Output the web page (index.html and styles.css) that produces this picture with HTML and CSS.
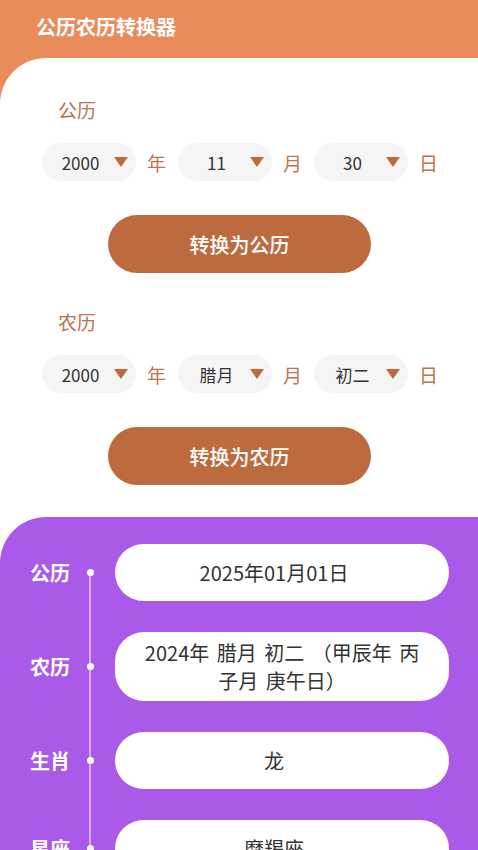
FILE: index.html
```html
<!DOCTYPE html>
<html lang="zh">
    <head>
        <meta charset="UTF-8" />
        <meta name="viewport" content="width=device-width, initial-scale=1.0" />
        <title>公历农历转换器</title>
        <link rel="stylesheet" href="styles.css">
    </head>
    <body>
        <div class="header">
            <h3>公历农历转换器</h3>
        </div>
        <div class="main">
            <div class="form">
                <!-- 公历 -->
                <div class="section">
                    <h5>公历</h5>
                    <div class="pickers">
                        <div class="picker"><span>2000</span><i></i></div>
                        <span class="unit">年</span>
                        <div class="picker"><span>11</span><i></i></div>
                        <span class="unit">月</span>
                        <div class="picker"><span>30</span><i></i></div>
                        <span class="unit">日</span>
                    </div>
                    <button class="convert">转换为公历</button>
                </div>
                <!-- 农历 -->
                <div class="section">
                    <h5>农历</h5>
                    <div class="pickers">
                        <div class="picker"><span>2000</span><i></i></div>
                        <span class="unit">年</span>
                        <div class="picker"><span>腊月</span><i></i></div>
                        <span class="unit">月</span>
                        <div class="picker"><span>初二</span><i></i></div>
                        <span class="unit">日</span>
                    </div>
                    <button class="convert">转换为农历</button>
                </div>
            </div>

            <div class="result">
                <ul class="list">
                    <li>
                        <span class="name">公历</span>
                        <span class="dot"></span>
                        <div class="value">2025年01月01日</div>
                    </li>
                    <li>
                        <span class="name">农历</span>
                        <span class="dot"></span>
                        <div class="value wide">2024年 腊月 初二 （甲辰年 丙子月 庚午日）</div>
                    </li>
                    <li>
                        <span class="name">生肖</span>
                        <span class="dot"></span>
                        <div class="value">龙</div>
                    </li>
                    <li>
                        <span class="name">星座</span>
                        <span class="dot"></span>
                        <div class="value">摩羯座</div>
                    </li>
                </ul>
            </div>
        </div>
    </body>
</html>
```

FILE: styles.css
```css
body {
    margin: 0;
    background: #e98b5b;
    font-family: "Noto Sans CJK SC", "Noto Sans", sans-serif;
    overflow: hidden;
}
ul {
    margin: 0;
    padding: 0;
    list-style: none;
}
h3,
h5 {
    margin: 0;
}
.header {
    height: 58px;
    display: flex;
    align-items: center;
    padding-left: 36px;
    padding-bottom: 5px;
    box-sizing: border-box;
}
.header h3 {
    color: white;
    font-size: 20px;
    font-weight: 700;
}
.main {
    background: white;
    border-top-left-radius: 46px;
    min-height: 792px;
}
.form {
    padding: 39px 0 32px 42px;
}
.section + .section {
    margin-top: 36px;
}
.section h5 {
    padding-left: 16px;
    font-size: 19px;
    line-height: 26px;
    font-weight: 400;
    color: #b8734f;
}
.pickers {
    display: flex;
    align-items: center;
    margin-top: 20px;
}
.picker {
    width: 94px;
    height: 38px;
    box-sizing: border-box;
    padding: 0 8px 0 10px;
    border-radius: 19px;
    background: #f5f5f5;
    display: flex;
    align-items: center;
}
.picker span {
    flex: 1;
    text-align: center;
    font-size: 17px;
    color: #333;
}
.picker i {
    width: 0;
    height: 0;
    margin-left: 5px;
    border-left: 7px solid transparent;
    border-right: 7px solid transparent;
    border-top: 10px solid #bd6a3c;
}
.unit {
    margin: 0 12px 0 11px;
    font-size: 19px;
    color: #c0744c;
}
.convert {
    display: block;
    width: 263px;
    height: 58px;
    margin: 34px 0 0 66px;
    border: none;
    border-radius: 29px;
    background: #bc6b3f;
    color: white;
    font-family: inherit;
    font-size: 20px;
    font-weight: 500;
}
.result {
    background: #a95ae8;
    border-top-left-radius: 46px;
    padding: 27px 29px 40px 30px;
}
.list {
    position: relative;
    display: flex;
    flex-direction: column;
    gap: 31px;
}
/* 时间轴竖线 */
.list::before {
    content: "";
    position: absolute;
    left: 59px;
    top: 30px;
    bottom: -60px;
    width: 2px;
    background: rgba(255, 220, 255, 0.6);
}
.list li {
    display: flex;
    align-items: center;
}
.list .name {
    width: 40px;
    color: white;
    font-size: 20px;
    font-weight: 700;
    line-height: 28px;
}
.list .dot {
    width: 7px;
    height: 7px;
    margin: 0 21px 0 17px;
    border-radius: 50%;
    background: white;
}
.list .value {
    flex: 1;
    min-height: 57px;
    box-sizing: border-box;
    padding: 7px 38px 6px 22px;
    border-radius: 29px;
    background: white;
    display: flex;
    align-items: center;
    justify-content: center;
    text-align: center;
    font-size: 20px;
    line-height: 28px;
    color: #333;
}
.list .value.wide {
    padding-left: 24px;
    padding-right: 24px;
    word-spacing: 3px;
}
```
